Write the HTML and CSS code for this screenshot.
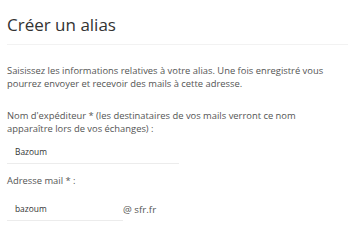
FILE: index.html
```
<!DOCTYPE html>
<html lang="fr">
<head>
<meta charset="utf-8">
<link rel="stylesheet" href="styles.css">
</head>
<body>
<main class="page">
  <h1 class="title">Créer un alias</h1>
  <div class="divider"></div>
  <p class="intro">Saisissez les informations relatives à votre alias. Une fois enregistré vous pourrez envoyer et recevoir des mails à cette adresse.</p>
  <label class="label" for="sender">Nom d'expéditeur * (les destinataires de vos mails verront ce nom apparaître lors de vos échanges) :</label>
  <div class="field field-name"><input id="sender" class="input" type="text" value="Bazoum"></div>
  <label class="label label-mail" for="mail">Adresse mail * :</label>
  <div class="mail-row">
    <div class="field field-mail"><input id="mail" class="input" type="text" value="bazoum"></div>
    <span class="domain">@ sfr.fr</span>
  </div>
</main>
</body>
</html>
```
FILE: styles.css
```
html, body {
  margin: 0;
  padding: 0;
  background: #ffffff;
}
.page {
  padding: 14px 16px 0 7px;
  font-family: "Open Sans", "Liberation Sans", sans-serif;
  color: #555;
}
.title {
  margin: 0;
  font-size: 17px;
  font-weight: 400;
  line-height: 22px;
  color: #333;
}
.divider {
  margin-top: 8px;
  border-top: 1px solid #f2f2f2;
}
.intro {
  margin: 20px 0 0;
  font-size: 9.4px;
  line-height: 12.5px;
  width: 330px;
}
.label {
  display: block;
  font-size: 9.4px;
  line-height: 12.5px;
  margin-top: 20px;
  width: 310px;
}
.field {
  border-bottom: 1px solid #ececec;
  padding: 11px 0 6px 8px;
}
.field-name {
  width: 164px;
}
.field-mail {
  width: 108px;
}
.input {
  display: block;
  border: none;
  outline: none;
  padding: 0;
  margin: 0;
  background: transparent;
  font-family: "Open Sans", "Liberation Sans", sans-serif;
  font-size: 8.4px;
  line-height: 11px;
  height: 11px;
  color: #333;
  width: 100%;
}
.label-mail {
  margin-top: 11px;
}
.mail-row {
  display: flex;
  align-items: flex-end;
  margin-top: 4px;
}
.domain {
  font-size: 9.8px;
  line-height: 12px;
  color: #555;
  margin-bottom: 5px;
}
```
